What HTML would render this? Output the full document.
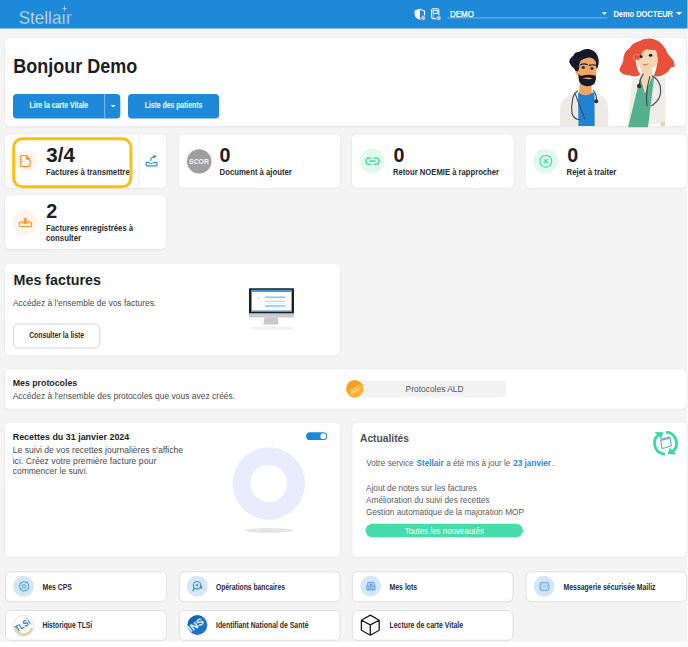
<!DOCTYPE html>
<html><head><meta charset="utf-8">
<style>
*{margin:0;padding:0}
html,body{width:688px;height:647px;overflow:hidden;background:#fff}
svg{display:block;font-family:"Liberation Sans",sans-serif}
.b{font-weight:bold}
.dk{fill:#1d1d25}
.gy{fill:#4a4a4a}
</style></head><body>
<svg width="688" height="647" viewBox="0 0 688 647">
<defs>
<filter id="sh" x="-5%" y="-20%" width="110%" height="140%"><feDropShadow dx="0" dy="0.3" stdDeviation="0.8" flood-color="#000" flood-opacity="0.08"/></filter>
</defs>
<!-- page bg -->
<rect x="0" y="0" width="687" height="642" fill="#f4f4f4"/>
<rect x="687" y="0" width="1" height="642" fill="#fafafa"/>
<!-- header -->
<rect x="0" y="0" width="687" height="28.5" fill="#1f89d9"/>
<rect x="687" y="0" width="1" height="28.5" fill="#8cc3ee"/>
<text x="18.75" y="23.75" font-size="17.5" fill="#e4f0fb" stroke="#1f89d9" stroke-width="0.45" textLength="53" lengthAdjust="spacingAndGlyphs">Stellaır</text>
<path d="M64.6 4.6 L64.95 8.25 L68.2 8.6 L64.95 8.95 L64.6 12.8 L64.25 8.95 L61 8.6 L64.25 8.25 Z" fill="#e4f0fb"/>
<!-- header right icons -->
<path d="M419.9 9.3 L424.5 11 L424.5 14.5 Q424.3 17.8 419.9 19 Q415.5 17.8 415.3 14.5 L415.3 11 Z" fill="none" stroke="#fff" stroke-width="1.1" stroke-linejoin="round"/>
<path d="M419.9 8.7 L414.8 10.6 L414.8 14.5 Q415 18.2 419.9 19.5 Z" fill="#fff"/>
<circle cx="423.2" cy="18" r="2.5" fill="#c6c6c6" stroke="#1f89d9" stroke-width="0.7"/>
<rect x="431.7" y="8.8" width="7.1" height="9.8" rx="1.4" fill="none" stroke="#fff" stroke-width="1.1"/>
<rect x="433.3" y="10.4" width="3.9" height="3.1" fill="none" stroke="#fff" stroke-width="0.9"/>
<path d="M433 15.2 L434.2 15.2 M433 17 L434.2 17" stroke="#fff" stroke-width="0.8"/>
<circle cx="438.7" cy="18" r="2.5" fill="#c6c6c6" stroke="#1f89d9" stroke-width="0.7"/>
<text x="450" y="16.5" font-size="8.5" fill="#fff" stroke="#fff" stroke-width="0.25" textLength="24" lengthAdjust="spacingAndGlyphs">DEMO</text>
<rect x="447.5" y="17.5" width="160" height="0.8" fill="#8fc4ee"/>
<path d="M601.8 12.2 L606.9 12.2 L604.35 15 Z" fill="#fff"/>
<text x="613.4" y="16.8" font-size="8.5" class="b" fill="#fff" textLength="59.6" lengthAdjust="spacingAndGlyphs">Demo DOCTEUR</text>
<path d="M676 12 L682 12 L679 15 Z" fill="#fff"/>

<!-- hero card -->
<rect x="5" y="38" width="681" height="88" rx="5" fill="#fff" filter="url(#sh)"/>
<text x="13.3" y="73.1" font-size="20.5" class="b dk" textLength="124" lengthAdjust="spacingAndGlyphs">Bonjour Demo</text>
<rect x="13" y="94" width="107.3" height="24.5" rx="3.8" fill="#1f89d9"/>
<rect x="104.3" y="94" width="0.8" height="24.5" fill="#9ccbf0"/>
<path d="M110.6 105 L115.6 105 L113.1 107.6 Z" fill="#fff"/>
<text x="29.6" y="108.4" font-size="8.8" class="b" fill="#fff" textLength="58.6" lengthAdjust="spacingAndGlyphs">Lire la carte Vitale</text>
<rect x="128" y="94" width="91" height="24.5" rx="3.8" fill="#1f89d9"/>
<text x="144.7" y="108.4" font-size="8.8" class="b" fill="#fff" textLength="57.6" lengthAdjust="spacingAndGlyphs">Liste des patients</text>

<!-- stats cards -->
<rect x="5" y="134.5" width="161" height="53.5" rx="5" fill="#fff" filter="url(#sh)"/>
<rect x="179" y="134.5" width="161" height="53.5" rx="5" fill="#fff" filter="url(#sh)"/>
<rect x="352" y="134.5" width="161.4" height="53.5" rx="5" fill="#fff" filter="url(#sh)"/>
<rect x="525.8" y="134.5" width="160.6" height="53.5" rx="5" fill="#fff" filter="url(#sh)"/>
<rect x="5" y="195.3" width="161" height="53.6" rx="5" fill="#fff" filter="url(#sh)"/>

<!-- card1 -->
<circle cx="27" cy="160.6" r="11.2" fill="#fef5ec"/>
<path d="M21.6 155.5 L26.2 155.5 L30 159.3 L30 165.6 Q30 166.5 29.1 166.5 L21.6 166.5 Q20.7 166.5 20.7 165.6 L20.7 156.4 Q20.7 155.5 21.6 155.5 Z" fill="none" stroke="#fd8a22" stroke-width="1.15" stroke-linejoin="round"/>
<path d="M25.8 155.6 L25.8 159.6 L29.9 159.6 Z" fill="#fd8a22"/>
<text x="46.3" y="162.3" font-size="20" class="b dk" textLength="28.5" lengthAdjust="spacingAndGlyphs">3/4</text>
<text x="46" y="174.5" font-size="8.5" class="b" fill="#2b2b33" textLength="83.7" lengthAdjust="spacingAndGlyphs">Factures à transmettre</text>
<rect x="13.7" y="138.8" width="117.2" height="47.9" rx="8.5" fill="none" stroke="#fdbf0f" stroke-width="3"/>
<rect x="138.4" y="134.5" width="0.9" height="53.5" fill="#ededed"/>
<path d="M147.1 162.4 L148.6 162.4 Q150 163.4 151.6 163.4 Q153.2 163.4 154.6 162.4 L156.1 162.4 Q157.1 162.4 157.1 163.4 L157.1 164.9 Q157.1 165.9 156.1 165.9 L147.1 165.9 Q146.1 165.9 146.1 164.9 L146.1 163.4 Q146.1 162.4 147.1 162.4 Z" fill="none" stroke="#2b8fe0" stroke-width="1.15" stroke-linejoin="round"/>
<path d="M150.6 160.4 Q150.9 157.3 154.4 156.6" fill="none" stroke="#2b8fe0" stroke-width="1.2" stroke-linecap="round"/>
<path d="M153.5 154.4 L156.7 156.5 L153.9 158.4 Z" fill="#2b8fe0"/>

<!-- card2 SCOR -->
<circle cx="199.2" cy="161.4" r="12.2" fill="#9e9e9e"/>
<text x="189.1" y="164" font-size="7.6" class="b" fill="#f4f4f4" textLength="19.8" lengthAdjust="spacingAndGlyphs">SCOR</text>
<text x="219.6" y="162.4" font-size="20" class="b dk" textLength="11" lengthAdjust="spacingAndGlyphs">0</text>
<text x="219.6" y="174.7" font-size="8.5" class="b" fill="#2b2b33" textLength="72.3" lengthAdjust="spacingAndGlyphs">Document à ajouter</text>

<!-- card3 NOEMIE -->
<circle cx="372.3" cy="161" r="12.4" fill="#e3f8ee"/>
<path d="M370.8 158 L368.4 158 Q366.1 158 366.1 161.1 Q366.1 164.2 368.4 164.2 L370.8 164.2 M374.2 158 L376.6 158 Q378.9 158 378.9 161.1 Q378.9 164.2 376.6 164.2 L374.2 164.2 M369.9 161.1 L375 161.1" fill="none" stroke="#52dea6" stroke-width="1.6" stroke-linecap="round"/>
<text x="393.6" y="162.2" font-size="20" class="b dk" textLength="11" lengthAdjust="spacingAndGlyphs">0</text>
<text x="393" y="174.5" font-size="8.5" class="b" fill="#2b2b33" textLength="106" lengthAdjust="spacingAndGlyphs">Retour NOEMIE à rapprocher</text>

<!-- card4 Rejet -->
<circle cx="545.7" cy="161.1" r="12.4" fill="#e3f8ee"/>
<circle cx="545.8" cy="161.2" r="5.9" fill="none" stroke="#4fdca5" stroke-width="1.2"/>
<path d="M543.7 159.1 L547.9 163.3 M547.9 159.1 L543.7 163.3" stroke="#4fdca5" stroke-width="1.3"/>
<text x="567.2" y="162.2" font-size="20" class="b dk" textLength="11" lengthAdjust="spacingAndGlyphs">0</text>
<text x="566.6" y="174.6" font-size="8.5" class="b" fill="#2b2b33" textLength="49.8" lengthAdjust="spacingAndGlyphs">Rejet à traiter</text>

<!-- card5 -->
<circle cx="25" cy="222.4" r="12.4" fill="#fef5ec"/>
<path d="M20.4 222.1 L21.8 222.1 Q23.5 223.4 25.4 223.4 Q27.3 223.4 29 222.1 L30.4 222.1 Q31.5 222.1 31.5 223.2 L31.5 225.4 Q31.5 226.5 30.4 226.5 L20.4 226.5 Q19.3 226.5 19.3 225.4 L19.3 223.2 Q19.3 222.1 20.4 222.1 Z" fill="none" stroke="#fd9420" stroke-width="1.2" stroke-linejoin="round"/>
<rect x="24.2" y="217.6" width="2.2" height="3.4" fill="#fd9420"/>
<path d="M22.6 220.6 L28 220.6 L25.3 224 Z" fill="#fd9420"/>
<text x="46.2" y="218.3" font-size="20" class="b dk" textLength="11" lengthAdjust="spacingAndGlyphs">2</text>
<text x="46" y="230.9" font-size="8.5" class="b" fill="#2b2b33" textLength="87.2" lengthAdjust="spacingAndGlyphs">Factures enregistrées à</text>
<text x="46" y="241.4" font-size="8.5" class="b" fill="#2b2b33" textLength="35" lengthAdjust="spacingAndGlyphs">consulter</text>

<!-- mes factures -->
<rect x="5" y="263.7" width="335" height="91.5" rx="5" fill="#fff" filter="url(#sh)"/>
<text x="13.6" y="285.2" font-size="15.5" class="b dk" textLength="87.3" lengthAdjust="spacingAndGlyphs">Mes factures</text>
<text x="12.9" y="306.2" font-size="8.5" class="gy" textLength="143.3" lengthAdjust="spacingAndGlyphs">Accédez à l'ensemble de vos factures.</text>
<rect x="13.4" y="324" width="86.5" height="24" rx="4.5" fill="#fff" stroke="#d3d5dc" stroke-width="1"/>
<text x="29.2" y="337.8" font-size="8.9" class="b" fill="#2a2a30" textLength="54.8" lengthAdjust="spacingAndGlyphs">Consulter la liste</text>
<!-- monitor -->
<g transform="translate(230,275) scale(0.11628)">
<ellipse cx="357" cy="457" rx="192" ry="18" fill="#f2f2f2"/>
<path d="M295 365 L410 365 L418 425 L287 425 Z" fill="#c8c8c8"/>
<rect x="163" y="325" width="387" height="40" rx="4" fill="#cbcbcb"/>
<rect x="163" y="113" width="387" height="217" rx="8" fill="#1c1c1c"/>
<rect x="185" y="128" width="345" height="190" fill="#fdfdfd"/>
<rect x="185" y="128" width="345" height="18" fill="#3b9ae6"/>
<rect x="185" y="305" width="345" height="13" fill="#3b9ae6"/>
<rect x="300" y="186" width="175" height="9" fill="#5aabee"/>
<rect x="300" y="222" width="175" height="7" fill="#8cc4f2"/>
<rect x="300" y="262" width="175" height="9" fill="#5aabee"/>
<rect x="300" y="205" width="175" height="3" fill="#dcdcdc"/>
<rect x="300" y="242" width="175" height="3" fill="#dcdcdc"/>
<rect x="300" y="282" width="90" height="3" fill="#dcdcdc"/>
<circle cx="245" cy="200" r="11" fill="#dfeaf5"/>
</g>

<!-- protocoles -->
<rect x="5" y="369.6" width="681.4" height="39.1" rx="5" fill="#fff" filter="url(#sh)"/>
<text x="12.7" y="385.9" font-size="9.3" class="b dk" textLength="64.5" lengthAdjust="spacingAndGlyphs">Mes protocoles</text>
<text x="12.7" y="398.8" font-size="8.5" class="gy" textLength="222.5" lengthAdjust="spacingAndGlyphs">Accédez à l'ensemble des protocoles que vous avez créés.</text>
<rect x="348" y="380.5" width="158.4" height="17" rx="5" fill="#f2f2f2"/>
<circle cx="354.8" cy="388.7" r="9.4" fill="#fff"/>
<circle cx="354.8" cy="388.7" r="8.7" fill="#f9a11b"/>
<path d="M347.5 393.5 A8.7 8.7 0 0 0 362.5 392.8 L362.5 384 Z" fill="#fbb23f"/>
<path d="M349 391.5 L360 385 M350 394 L361.5 387.5 M351.5 389 L353.5 393 M355 387 L357 391" stroke="#fde3b0" stroke-width="0.7"/>
<text x="405.6" y="392.3" font-size="8.5" fill="#555" textLength="58" lengthAdjust="spacingAndGlyphs">Protocoles ALD</text>

<!-- recettes -->
<rect x="5" y="422.7" width="334.8" height="134.1" rx="5" fill="#fff" filter="url(#sh)"/>
<text x="12.7" y="440.1" font-size="9.6" class="b dk" textLength="116.6" lengthAdjust="spacingAndGlyphs">Recettes du 31 janvier 2024</text>
<text x="12.7" y="453.2" font-size="8.5" class="gy" textLength="170.4" lengthAdjust="spacingAndGlyphs">Le suivi de vos recettes journalières s'affiche</text>
<text x="12.7" y="463.6" font-size="8.5" class="gy" textLength="143.6" lengthAdjust="spacingAndGlyphs">ici. Créez votre première facture pour</text>
<text x="12.7" y="473.8" font-size="8.5" class="gy" textLength="75.2" lengthAdjust="spacingAndGlyphs">commencer le suivi.</text>
<rect x="306.1" y="432.3" width="21" height="7.8" rx="3.9" fill="#1f89d9"/>
<circle cx="323.2" cy="436.2" r="2.9" fill="#fff"/>
<path d="M268.8 447.3 A36.2 36.2 0 1 1 268.79 447.3 Z M268.8 465.1 A18.4 18.4 0 1 0 268.81 465.1 Z" fill="#e9ecfc" fill-rule="evenodd"/>
<ellipse cx="269.2" cy="530.4" rx="24.4" ry="2.3" fill="#e4e4e4"/>

<!-- actualites -->
<rect x="352.4" y="422.7" width="334" height="134.1" rx="5" fill="#fff" filter="url(#sh)"/>
<text x="360" y="442" font-size="11" class="b" fill="#4e4e4e" textLength="49" lengthAdjust="spacingAndGlyphs">Actualités</text>
<g font-size="9" fill="#5b5b5b">
<text x="366.2" y="465.8" textLength="47.5" lengthAdjust="spacingAndGlyphs">Votre service</text>
<text x="416.6" y="465.8" class="b" fill="#1f89d9" textLength="27" lengthAdjust="spacingAndGlyphs">Stellair</text>
<text x="446.3" y="465.8" textLength="64" lengthAdjust="spacingAndGlyphs">a été mis à jour le</text>
<text x="513.2" y="465.8" class="b" fill="#1f89d9" textLength="37.8" lengthAdjust="spacingAndGlyphs">23 janvier</text>
<text x="551.7" y="465.8">.</text>
<text x="366" y="490.7" textLength="111" lengthAdjust="spacingAndGlyphs">Ajout de notes sur les factures</text>
<text x="366" y="502.9" textLength="123.5" lengthAdjust="spacingAndGlyphs">Amélioration du suivi des recettes</text>
<text x="366" y="515.1" textLength="158" lengthAdjust="spacingAndGlyphs">Gestion automatique de la majoration MOP</text>
</g>
<rect x="365.5" y="523.8" width="157.4" height="13.4" rx="6.7" fill="#44dda9"/>
<text x="404.7" y="533.5" font-size="8.7" fill="#fff" textLength="79.3" lengthAdjust="spacingAndGlyphs">Toutes les nouveautés</text>
<!-- refresh icon -->
<g fill="none" stroke="#33d99f" stroke-width="2.7">
<path d="M664.92 454.18 A11 11 0 0 1 658.43 434.77"/>
<path d="M666.08 432.22 A11 11 0 0 1 672.57 451.63"/>
</g>
<path d="M661.12 438.67 L654.59 431.91 L663.59 432.37 Z" fill="#33d99f"/>
<path d="M669.88 447.73 L676.41 454.49 L667.41 454.03 Z" fill="#33d99f"/>
<path d="M660.6 439.4 L670 436.9 L671.4 446 L662 448.6 Z" fill="#fafcff" stroke="#4a90e2" stroke-width="0.9"/>
<path d="M660.6 439.4 L670 436.9 L670.3 438.5 L660.9 441 Z" fill="#6aa9ec"/>

<!-- link cards -->
<g fill="#fff" stroke="#dcdcde" stroke-width="0.9">
<rect x="5.6" y="571.8" width="161" height="29.9" rx="5"/>
<rect x="179.4" y="571.8" width="160.6" height="29.9" rx="5"/>
<rect x="352.4" y="571.8" width="160.6" height="29.9" rx="5"/>
<rect x="526.1" y="571.8" width="160.6" height="29.9" rx="5"/>
<rect x="5.6" y="610.5" width="161" height="29.8" rx="5"/>
<rect x="179.4" y="610.5" width="160.6" height="29.8" rx="5"/>
<rect x="352.4" y="610.5" width="160.6" height="29.8" rx="5"/>
</g>
<!-- icons row1 -->
<circle cx="23.6" cy="586.3" r="10.5" fill="#d5e7f7"/>
<path d="M23.8 581.6 L25.6 582.3 L27.3 581.9 L27.8 583.7 L29 585 L28.3 586.6 L28.9 588.3 L27.3 589.1 L26.6 590.8 L24.8 590.5 L23.3 591.3 L22.1 589.9 L20.3 589.6 L20.3 587.8 L19.1 586.4 L20.1 584.9 L20.1 583 L21.9 582.6 Z" fill="none" stroke="#3b8ee0" stroke-width="1"/>
<circle cx="24" cy="586.4" r="1.8" fill="none" stroke="#3b8ee0" stroke-width="0.9"/>
<circle cx="197.2" cy="586.3" r="10.5" fill="#d5e7f7"/>
<circle cx="197" cy="585.2" r="3.7" fill="none" stroke="#3a8de0" stroke-width="1.1"/>
<path d="M194.6 588 L192.9 590.6" stroke="#3a8de0" stroke-width="1.3" stroke-linecap="round"/>
<rect x="196.2" y="584" width="1.7" height="2.2" fill="#3a8de0"/>
<circle cx="201" cy="587.4" r="1.3" fill="#3a8de0"/>
<circle cx="370.7" cy="586" r="10.4" fill="#d5e7f7"/>
<path d="M366.8 590 L366.8 586.2 L368 582.3 L373.8 582.3 L375 586.2 L375 590 Z" fill="#b5d5f3" stroke="#5b9de2" stroke-width="0.9" stroke-linejoin="round"/>
<path d="M366.8 586.4 L375 586.4 M368.6 590 L368.6 588.3 L373.2 588.3 L373.2 590" fill="none" stroke="#5b9de2" stroke-width="0.8"/>
<rect x="369.6" y="583.8" width="2.6" height="1.8" fill="#5b9de2"/>
<circle cx="544.1" cy="586.3" r="10.5" fill="#d5e7f7"/>
<rect x="539.9" y="582.3" width="9" height="8.4" rx="1.6" fill="#a8cdf1" stroke="#6aa5e4" stroke-width="0.8"/>
<path d="M542.2 586.8 A2.2 2.2 0 0 1 546.4 585.6 M546.6 586.4 A2.2 2.2 0 0 1 542.4 587.6" fill="none" stroke="#f0f6fd" stroke-width="0.8"/>
<!-- icons row2 -->
<circle cx="23.6" cy="625.4" r="10.2" fill="#fff" stroke="#d2dbe3" stroke-width="0.7"/>
<path d="M15 627.6 A8.8 8.8 0 0 0 32.4 627.6 L30.6 627.6 A7 7 0 0 1 16.8 627.6 Z" fill="#f3d27a"/>
<path d="M14.6 628.5 A9.4 9.4 0 0 0 32.8 628.5" fill="none" stroke="#a9b4c0" stroke-width="0.6"/>
<text x="0" y="0" font-size="9" class="b" fill="#2f7fd0" transform="translate(17.2,632.2) rotate(-33)" textLength="16.5" lengthAdjust="spacingAndGlyphs">TLSi</text>
<circle cx="197.4" cy="625.1" r="9.9" fill="#1a74cc"/>
<path d="M187.6 625 A9.9 9.9 0 0 1 203 617" fill="#1463b5"/>
<text x="0" y="0" font-size="9.5" class="b" fill="#f2f6fb" transform="translate(190.6,632.6) rotate(-35)" textLength="17" lengthAdjust="spacingAndGlyphs">INS</text>
<path d="M370.3 615.1 L379.2 620.2 L379.2 630.3 L370.3 635.2 L361.4 630.3 L361.4 620.2 Z M361.4 620.2 L370.3 624.9 L379.2 620.2 M370.3 624.9 L370.3 635.2" fill="none" stroke="#1b1b1f" stroke-width="1.3" stroke-linejoin="round"/>
<!-- link labels -->
<g font-size="8.2" class="b" fill="#2a2a30">
<text x="42.4" y="589.9" textLength="29.5" lengthAdjust="spacingAndGlyphs">Mes CPS</text>
<text x="216" y="589.9" textLength="69" lengthAdjust="spacingAndGlyphs">Opérations bancaires</text>
<text x="389.5" y="589.9" textLength="27.7" lengthAdjust="spacingAndGlyphs">Mes lots</text>
<text x="563.5" y="589.9" textLength="92" lengthAdjust="spacingAndGlyphs">Messagerie sécurisée Mailiz</text>
<text x="42.4" y="627.9" textLength="49.7" lengthAdjust="spacingAndGlyphs">Historique TLSi</text>
<text x="216" y="627.9" textLength="92.5" lengthAdjust="spacingAndGlyphs">Identifiant National de Santé</text>
<text x="389.5" y="627.9" textLength="73.6" lengthAdjust="spacingAndGlyphs">Lecture de carte Vitale</text>
</g>

<!-- doctors illustration -->
<g id="docs">
<g transform="translate(555,40) scale(0.13605)">
<path d="M35 632 L40 480 Q48 430 110 408 L172 372 L290 372 L345 412 Q388 440 390 500 L392 632 Z" fill="#eeebe5"/>
<path d="M170 388 L290 388 L292 632 L172 632 Z" fill="#1f83d4"/>
<path d="M180 290 L268 290 L270 392 Q225 420 178 392 Z" fill="#efa563"/>
<path d="M168 160 Q175 115 235 110 Q300 112 305 170 L302 270 Q295 330 238 338 Q180 330 172 270 Z" fill="#efa563"/>
<ellipse cx="168" cy="235" rx="17" ry="24" fill="#efa563"/>
<path d="M104 162 Q108 130 135 115 Q140 90 185 85 Q205 62 250 66 Q295 75 312 115 Q330 150 315 200 L305 215 L300 160 Q280 125 240 130 Q205 140 190 150 Q175 170 178 205 L170 230 Q150 235 140 210 Q118 195 104 162 Z" fill="#151a2b"/>
<path d="M172 250 Q190 268 200 262 Q240 248 300 262 Q305 300 285 325 Q255 345 225 338 Q185 330 175 295 Z" fill="#151a2b"/>
<path d="M200 282 Q240 268 278 285 Q240 292 200 282 Z" fill="#efa563"/>
<ellipse cx="208" cy="202" rx="12" ry="9" fill="#151a2b"/>
<ellipse cx="272" cy="210" rx="11" ry="9" fill="#151a2b"/>
<path d="M188 182 Q212 170 238 180 M252 186 Q278 178 302 186" fill="none" stroke="#151a2b" stroke-width="9" stroke-linecap="round"/>
<g fill="none" stroke="#40455a" stroke-width="8" stroke-linecap="round">
<path d="M165 374 Q130 400 128 450 Q118 490 125 540 Q140 585 182 585"/>
<path d="M282 374 Q305 395 305 440"/>
<path d="M150 400 Q180 480 218 578"/>
</g>
<circle cx="303" cy="450" r="15" fill="#2a2e3d"/>
</g>
<g transform="translate(615,36) scale(0.14225)">
<path d="M120 290 L355 290 L355 610 L90 642 Z" fill="#efede8"/>
<path d="M178 288 L210 400 L262 284 L275 290 L232 642 L92 642 Z" fill="#55b08f"/>
<path d="M188 200 L258 200 L262 284 L210 400 L178 288 Z" fill="#f7d5b3"/>
<path d="M35 248 Q25 228 48 200 Q62 178 60 145 Q70 105 105 82 Q125 45 175 35 Q205 15 250 18 Q300 25 330 58 Q358 85 370 125 Q390 145 408 170 Q425 198 415 220 Q398 212 388 228 Q370 258 330 278 Q300 290 272 282 Q292 240 298 185 Q302 130 280 98 Q250 75 205 82 Q168 98 152 135 Q140 180 156 228 Q165 255 178 270 Q150 292 118 282 Q95 270 72 272 Q48 268 35 248 Z" fill="#e8503a"/>
<path d="M152 140 Q170 95 215 80 Q262 78 290 105 Q302 140 298 185 Q290 230 222 240 Q170 232 155 195 Z" fill="#f7d5b3"/>
<path d="M140 160 Q150 100 200 68 Q250 55 292 100 Q250 95 215 95 Q180 115 168 170 Z" fill="#e8503a"/>
<ellipse cx="182" cy="145" rx="12" ry="11" fill="#151a2b"/>
<ellipse cx="250" cy="135" rx="12" ry="11" fill="#151a2b"/>
<path d="M200 200 Q215 208 232 196" fill="none" stroke="#e56a52" stroke-width="8" stroke-linecap="round"/>
<circle cx="152" cy="152" r="24" fill="none" stroke="#f2cbb8" stroke-width="3"/>
<g fill="none" stroke="#40455a" stroke-width="8" stroke-linecap="round">
<path d="M198 268 Q175 300 170 345"/>
<path d="M262 280 Q300 300 318 350 Q330 420 292 462 Q275 482 255 490"/>
<path d="M245 286 Q222 360 222 430 Q220 470 226 490"/>
</g>
<circle cx="170" cy="352" r="16" fill="#2a2e3d"/>
<path d="M318 615 Q330 595 350 600 L355 632 L320 634 Z" fill="#f3d3ad"/>
</g>
</g>
</svg>
</body></html>
